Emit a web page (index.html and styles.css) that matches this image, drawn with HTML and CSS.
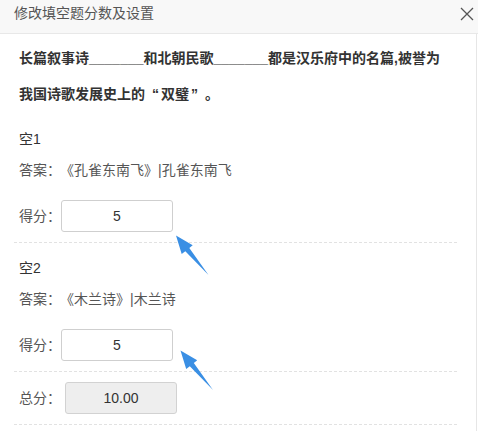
FILE: index.html
```html
<!DOCTYPE html>
<html lang="zh-CN">
<head>
<meta charset="utf-8">
<title>修改填空题分数及设置</title>
<link rel="stylesheet" href="styles.css">
</head>
<body>
<div class="dialog">
  <div class="titlebar">
    <span class="title">修改填空题分数及设置</span>
    <svg class="close" width="14" height="14" viewBox="0 0 14 14"><path d="M1 1L13 13M13 1L1 13" stroke="#555" stroke-width="1.3" fill="none"/></svg>
  </div>
  <div class="content">
    <div class="question">
      <div class="qline">长篇叙事诗_______和北朝民歌_______都是汉乐府中的名篇,被誉为</div>
      <div class="qline"><span>我国诗歌发展史上的</span><span class="lq">“</span><span>双璧</span><span class="rq">”</span><span>。</span></div>
    </div>
    <div class="section">
      <div class="blank">空1</div>
      <div class="answer">答案：<span class="value">《孔雀东南飞》|孔雀东南飞</span></div>
      <div class="score-row"><span class="label">得分：</span><div class="score-input">5</div></div>
    </div>
    <div class="section">
      <div class="blank">空2</div>
      <div class="answer">答案：<span class="value">《木兰诗》|木兰诗</span></div>
      <div class="score-row"><span class="label">得分：</span><div class="score-input">5</div></div>
    </div>
    <div class="total">
      <span class="label">总分：</span><div class="total-box">10.00</div>
    </div>
  </div>
  <svg class="arrows" width="478" height="431" viewBox="0 0 478 431">
    <polygon points="176,235.5 192.7,245.3 189.3,248 208.5,275 185.3,251.3 181.7,254" fill="#3a8fe4"/>
    <polygon points="180.5,350.5 197.2,360.3 193.8,363 213,390 189.8,366.3 186.2,369" fill="#3a8fe4"/>
  </svg>
</div>
</body>
</html>
```
FILE: styles.css
```css
html, body {
  margin: 0;
  padding: 0;
  background: #fff;
}
body {
  font-family: "Liberation Sans", "Noto Sans CJK SC", sans-serif;
  font-size: 14px;
  color: #333;
}
.dialog {
  position: relative;
  width: 478px;
  height: 431px;
  overflow: hidden;
}
.titlebar {
  height: 33px;
  background: #f8f8f8;
  border-bottom: 1px solid #e8e8e8;
  display: flex;
  align-items: flex-start;
  justify-content: space-between;
  padding: 0 4px 0 14px;
}
.title {
  line-height: 27px;
  color: #555;
}
.close {
  margin-top: 7px;
}
.content {
  width: 477px;
  height: 397px;
  box-sizing: border-box;
  border-right: 1px solid #e6e6e6;
  padding: 0 19px 0 14px;
}
.question {
  padding: 6px 0 0 5px;
  line-height: 36px;
  font-weight: bold;
  color: #333;
}
.qline {
  white-space: nowrap;
}
.lq {
  margin-left: 7px;
  margin-right: 2px;
}
.rq {
  margin-left: 2px;
  margin-right: 7px;
}
.section {
  padding: 15px 0 10px 5px;
  border-bottom: 1px dashed #e2e2e2;
}
.question + .section {
  padding-top: 17px;
}
.blank {
  line-height: 20px;
  color: #333;
}
.answer {
  margin-top: 11px;
  line-height: 20px;
  color: #555;
}
.value {
  margin-left: 6px;
}
.score-row {
  margin-top: 20px;
  display: flex;
  align-items: center;
}
.label {
  color: #555;
  line-height: 20px;
}
.score-input {
  width: 112px;
  height: 32px;
  box-sizing: border-box;
  border: 1px solid #cfcfcf;
  border-radius: 3px;
  display: flex;
  align-items: center;
  justify-content: center;
  color: #333;
}
.total {
  padding: 10px 0 10px 5px;
  border-bottom: 1px dashed #e2e2e2;
  display: flex;
  align-items: center;
}
.total-box {
  margin-left: 4px;
  width: 112px;
  height: 32px;
  box-sizing: border-box;
  border: 1px solid #d2d2d2;
  border-radius: 3px;
  background: #eeeeee;
  display: flex;
  align-items: center;
  justify-content: center;
  color: #333;
}
.arrows {
  position: absolute;
  left: 0;
  top: 0;
  pointer-events: none;
}
```
